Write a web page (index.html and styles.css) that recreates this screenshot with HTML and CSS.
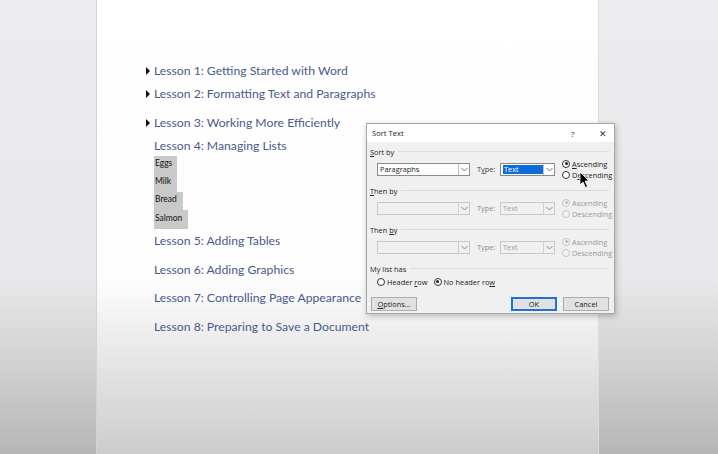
FILE: index.html
```html
<!DOCTYPE html>
<html>
<head>
<meta charset="utf-8">
<link rel="stylesheet" href="styles.css">
</head>
<body>
<div class="desk">
  <div class="gutter"></div>
  <div class="page">
    <ul class="lessons">
      <li class="lesson bullet l1">Lesson 1: Getting Started with Word</li>
      <li class="lesson bullet l2">Lesson 2: Formatting Text and Paragraphs</li>
      <li class="lesson bullet l3">Lesson 3: Working More Efficiently</li>
      <li class="lesson l4">Lesson 4: Managing Lists</li>
      <li class="items">
        <span class="item i1">Eggs</span>
        <span class="item i2">Milk</span>
        <span class="item i3">Bread</span>
        <span class="item i4">Salmon</span>
      </li>
      <li class="lesson l5">Lesson 5: Adding Tables</li>
      <li class="lesson l6">Lesson 6: Adding Graphics</li>
      <li class="lesson l7">Lesson 7: Controlling Page Appearance</li>
      <li class="lesson l8">Lesson 8: Preparing to Save a Document</li>
    </ul>
  </div>
  <div class="gutter"></div>
</div>

<div class="dialog">
  <div class="titlebar">
    <span class="title">Sort Text</span>
    <span class="help">?</span>
    <span class="close">✕</span>
  </div>
  <div class="body">
    <div class="group">
      <div class="ghead"><span><u>S</u>ort by</span><i></i></div>
      <div class="grow">
        <div class="combo"><span class="val">Paragraphs</span><span class="arrow"><svg width="7" height="5" viewBox="0 0 7 5"><path d="M0.5 1 L3.5 4 L6.5 1" fill="none" stroke="#777" stroke-width="1"/></svg></span></div>
        <span class="tlabel">T<u>y</u>pe:</span>
        <div class="combo small"><span class="val"><span class="sel">Text</span></span><span class="arrow"><svg width="7" height="5" viewBox="0 0 7 5"><path d="M0.5 1 L3.5 4 L6.5 1" fill="none" stroke="#777" stroke-width="1"/></svg></span></div>
        <div class="radios">
          <span class="radio"><b class="dot on"></b><span><u>A</u>scending</span></span>
          <span class="radio"><b class="dot"></b><span>D<u>e</u>scending</span></span>
        </div>
      </div>
    </div>
    <div class="group off">
      <div class="ghead"><span><u>T</u>hen by</span><i></i></div>
      <div class="grow">
        <div class="combo"><span class="val"></span><span class="arrow"><svg width="7" height="5" viewBox="0 0 7 5"><path d="M0.5 1 L3.5 4 L6.5 1" fill="none" stroke="#888" stroke-width="1"/></svg></span></div>
        <span class="tlabel">Type:</span>
        <div class="combo small"><span class="val">Text</span><span class="arrow"><svg width="7" height="5" viewBox="0 0 7 5"><path d="M0.5 1 L3.5 4 L6.5 1" fill="none" stroke="#888" stroke-width="1"/></svg></span></div>
        <div class="radios">
          <span class="radio"><b class="dot on"></b><span>Ascending</span></span>
          <span class="radio"><b class="dot"></b><span>Descending</span></span>
        </div>
      </div>
    </div>
    <div class="group off">
      <div class="ghead"><span>Then <u>b</u>y</span><i></i></div>
      <div class="grow">
        <div class="combo"><span class="val"></span><span class="arrow"><svg width="7" height="5" viewBox="0 0 7 5"><path d="M0.5 1 L3.5 4 L6.5 1" fill="none" stroke="#888" stroke-width="1"/></svg></span></div>
        <span class="tlabel">Type:</span>
        <div class="combo small"><span class="val">Text</span><span class="arrow"><svg width="7" height="5" viewBox="0 0 7 5"><path d="M0.5 1 L3.5 4 L6.5 1" fill="none" stroke="#888" stroke-width="1"/></svg></span></div>
        <div class="radios">
          <span class="radio"><b class="dot on"></b><span>Ascending</span></span>
          <span class="radio"><b class="dot"></b><span>Descending</span></span>
        </div>
      </div>
    </div>
    <div class="group last">
      <div class="ghead"><span>My list has</span><i></i></div>
      <div class="hrow">
        <span class="radio"><b class="dot"></b><span>Header <u>r</u>ow</span></span>
        <span class="radio"><b class="dot on"></b><span>No header ro<u>w</u></span></span>
      </div>
    </div>
    <div class="buttons">
      <button class="btn"><u>O</u>ptions...</button>
      <span class="spacer"></span>
      <button class="btn ok">OK</button>
      <button class="btn">Cancel</button>
    </div>
  </div>
</div>

<svg class="cursor" width="12" height="18" viewBox="0 0 12 18"><path d="M1 1 L1 14 L4 11 L6.5 16.5 L8.5 15.5 L6 10 L10 10 Z" fill="#000" stroke="#fff" stroke-width="0.8"/></svg>
</body>
</html>
```

FILE: styles.css
```css
html, body {
  margin: 0;
  padding: 0;
}
body {
  width: 718px;
  height: 454px;
  overflow: hidden;
  position: relative;
  background: #e9e9eb;
}
.desk {
  display: grid;
  grid-template-columns: 96px 503px 1fr;
  height: 454px;
}
.gutter {
  background: linear-gradient(to bottom, #ececee 0px, #e8e8ea 280px, #d2d2d2 360px, #b6b6b6 454px);
}
.page {
  background: linear-gradient(to bottom, #ffffff 0px, #fdfdfd 280px, #e6e6e6 360px, #cccccc 454px);
  border-left: 1px solid #d4d4d6;
  border-right: 1px solid #dcdcde;
  box-sizing: border-box;
  padding: 62px 0 0 57px;
}
.lessons {
  list-style: none;
  margin: 0;
  padding: 0;
  display: flex;
  flex-direction: column;
}
.lesson {
  font-family: "Lato", "Open Sans", sans-serif;
  font-size: 12.2px;
  line-height: 18px;
  height: 18px;
  color: #4a5b8b;
  position: relative;
  white-space: nowrap;
}
.bullet::before {
  content: "";
  position: absolute;
  left: -8px;
  top: 5px;
  border-left: 4px solid #111;
  border-top: 4px solid transparent;
  border-bottom: 4px solid transparent;
}
.l2 { margin-top: 5px; }
.l3 { margin-top: 11px; }
.l4 { margin-top: 5px; }
.l5 { margin-top: 3px; }
.l6 { margin-top: 11px; }
.l7 { margin-top: 10px; }
.l8 { margin-top: 11px; }
.items {
  display: flex;
  flex-direction: column;
  align-items: flex-start;
  margin-top: 1px;
}
.item {
  background: #c9c9c9;
  font-family: "Lato", "Open Sans", sans-serif;
  font-size: 8.5px;
  color: #111;
  padding: 0 0 4px 1px;
  box-sizing: border-box;
  display: flex;
  align-items: center;
}
.i1 { width: 23px; height: 18px; }
.i2 { width: 23px; height: 18px; }
.i3 { width: 29px; height: 18px; }
.i4 { width: 34px; height: 19px; }

/* dialog */
.dialog {
  position: absolute;
  left: 366px;
  top: 123px;
  width: 249px;
  height: 191px;
  box-sizing: border-box;
  border: 1px solid #a6a6a6;
  background: #f0f0f0;
  box-shadow: 1px 2px 6px rgba(0,0,0,0.25);
  font-family: "Open Sans", "Noto Sans", sans-serif;
  font-size: 7.4px;
  color: #222;
  display: flex;
  flex-direction: column;
}
.titlebar {
  height: 18px;
  background: #fff;
  display: flex;
  align-items: center;
  padding: 0 0 0 5px;
}
.title {
  flex: 1;
  font-size: 7.6px;
  color: #222;
}
.help {
  width: 12px;
  font-size: 8px;
  color: #333;
  margin-right: 16px;
}
.close {
  width: 12px;
  font-size: 9px;
  color: #333;
  margin-right: 3px;
}
.body {
  padding: 4px 5px 0 3px;
  display: flex;
  flex-direction: column;
}
.group {
  height: 35px;
  margin-bottom: 4px;
  display: flex;
  flex-direction: column;
}
.group.last {
  height: 26px;
  margin-bottom: 0;
}
.ghead {
  height: 11px;
  display: flex;
  align-items: center;
  gap: 4px;
  white-space: nowrap;
}
.ghead i {
  flex: 1;
  height: 0;
  border-top: 1px solid #dadada;
}
.grow {
  height: 24px;
  display: flex;
  align-items: center;
  padding-left: 7px;
}
.combo {
  flex: none;
  width: 93px;
  height: 13px;
  box-sizing: border-box;
  border: 1px solid #8a8a8a;
  background: #fff;
  display: flex;
  align-items: stretch;
}
.combo .val {
  flex: 1;
  display: flex;
  align-items: center;
  padding-left: 2px;
  overflow: hidden;
}
.combo .arrow {
  width: 10px;
  border-left: 1px solid #c2c2c2;
  display: flex;
  align-items: center;
  justify-content: center;
}
.combo.small {
  width: 55px;
}
.sel {
  background: #0a6ddb;
  color: #fff;
  width: 41px;
  height: 9px;
  display: flex;
  align-items: center;
  padding-left: 1px;
}
.tlabel {
  flex: none;
  margin: 0 5px 0 7px;
  color: #444;
  width: 18px;
}
.radios {
  flex: none;
  display: flex;
  flex-direction: column;
  margin-left: 7px;
  gap: 1px;
}
.radio {
  display: flex;
  align-items: center;
  gap: 2px;
  height: 10px;
  white-space: nowrap;
}
.dot {
  width: 8px;
  height: 8px;
  box-sizing: border-box;
  border: 1px solid #333;
  border-radius: 50%;
  background: #fff;
  position: relative;
  flex: none;
}
.dot.on::after {
  content: "";
  position: absolute;
  left: 1.5px;
  top: 1.5px;
  width: 3px;
  height: 3px;
  border-radius: 50%;
  background: #222;
}
.off .ghead { color: #222; }
.off .combo {
  background: #f0f0f0;
  border-color: #c8c8c8;
}
.off .combo .val { color: #a0a0a0; }
.off .combo .arrow { border-left-color: #d0d0d0; }
.off .tlabel { color: #8a8a8a; }
.off .radio { color: #9a9a9a; }
.off .dot {
  border-color: #c4c4c4;
  background: #f4f4f4;
}
.off .dot.on::after { background: #bbb; }
.hrow {
  height: 15px;
  display: flex;
  align-items: center;
  gap: 6px;
  padding-left: 7px;
}
.buttons {
  display: flex;
  align-items: center;
  margin-top: 8px;
  padding-left: 1px;
}
.spacer { flex: 1; }
.btn {
  height: 14px;
  width: 46px;
  box-sizing: border-box;
  border: 1px solid #adadad;
  background: #e1e1e1;
  font-family: "Open Sans", "Noto Sans", sans-serif;
  font-size: 7.4px;
  color: #222;
  padding: 0;
  margin-left: 6px;
  line-height: 12px;
}
.btn:first-child { margin-left: 0; }
.btn.ok {
  border: 1px solid #1c73d0;
  box-shadow: inset 0 0 0 1px #1c73d0;
}
.cursor {
  position: absolute;
  left: 579px;
  top: 171px;
}
```
